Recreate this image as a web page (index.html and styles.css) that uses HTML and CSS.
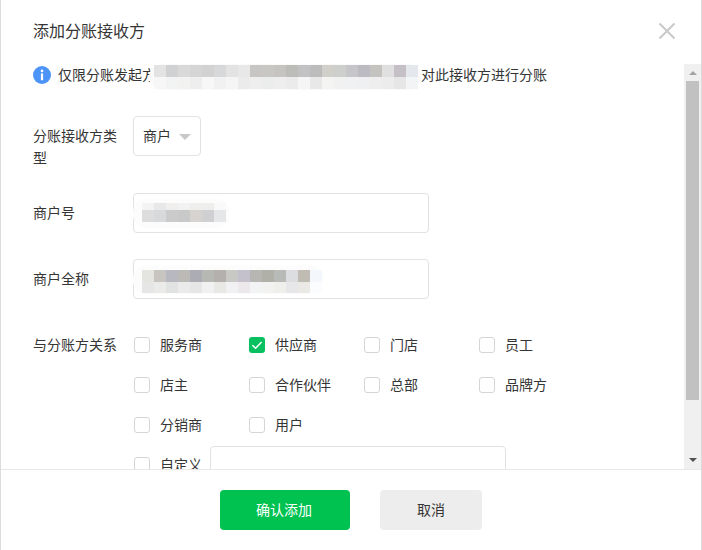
FILE: index.html
```html
<!DOCTYPE html>
<html lang="zh-CN">
<head>
    <meta charset="UTF-8">
    <meta name="viewport" content="width=device-width, initial-scale=1.0">
    <title>添加分账接收方</title>
    <link rel="stylesheet" href="styles.css">
</head>
<body>
    <div class="dialog">
        <div class="dialog-header">
            <h1>添加分账接收方</h1>
            <svg class="close-icon" width="18" height="18" viewBox="0 0 18 18">
                <path d="M1.5 1.5 L16.5 16.5 M16.5 1.5 L1.5 16.5" stroke="#c9c9c9" stroke-width="2" fill="none"/>
            </svg>
        </div>

        <div class="dialog-main">
            <div class="dialog-body">
                <div class="notice">
                    <svg class="info-icon" width="18" height="18" viewBox="0 0 18 18">
                        <circle cx="9" cy="9" r="9" fill="#4c94f8"/>
                        <circle cx="9" cy="4.9" r="1.3" fill="#fff"/>
                        <rect x="7.9" y="7.4" width="2.2" height="6.8" fill="#fff"/>
                    </svg>
                    <span class="notice-text">仅限分账发起方</span>
                    <span class="haze haze-notice"><span class="cells cells-notice"></span></span>
                    <span class="notice-text">对此接收方进行分账</span>
                </div>

                <div class="form-row form-row-type">
                    <label class="form-label">分账接收方类型</label>
                    <div class="select">
                        <span class="select-value">商户</span>
                        <span class="select-arrow"></span>
                    </div>
                </div>

                <div class="form-row">
                    <label class="form-label">商户号</label>
                    <div class="input-wrap">
                        <input type="text" class="text-input">
                        <span class="haze haze-no"><span class="cells cells-no"></span></span>
                    </div>
                </div>

                <div class="form-row">
                    <label class="form-label">商户全称</label>
                    <div class="input-wrap">
                        <input type="text" class="text-input">
                        <span class="haze haze-name"><span class="cells cells-name"></span></span>
                    </div>
                </div>

                <div class="form-row">
                    <label class="form-label">与分账方关系</label>
                    <div class="check-grid">
                        <label class="check-item"><span class="check-box"></span>服务商</label>
                        <label class="check-item"><span class="check-box checked">
                            <svg width="16" height="16" viewBox="0 0 16 16"><path d="M3.4 8.2 L6.6 11.2 L12.6 5" stroke="#fff" stroke-width="1.5" fill="none"/></svg>
                        </span>供应商</label>
                        <label class="check-item"><span class="check-box"></span>门店</label>
                        <label class="check-item"><span class="check-box"></span>员工</label>
                        <label class="check-item"><span class="check-box"></span>店主</label>
                        <label class="check-item"><span class="check-box"></span>合作伙伴</label>
                        <label class="check-item"><span class="check-box"></span>总部</label>
                        <label class="check-item"><span class="check-box"></span>品牌方</label>
                        <label class="check-item"><span class="check-box"></span>分销商</label>
                        <label class="check-item"><span class="check-box"></span>用户</label>
                        <div class="check-item check-custom">
                            <span class="check-box"></span>自定义
                            <input type="text" class="text-input custom-input">
                        </div>
                    </div>
                </div>
            </div>

            <div class="scrollbar">
                <span class="arrow-up"></span>
                <span class="thumb"></span>
                <span class="arrow-down"></span>
            </div>
        </div>

        <div class="dialog-footer">
            <button type="button" class="btn btn-primary">确认添加</button>
            <button type="button" class="btn btn-default">取消</button>
        </div>
    </div>
</body>
</html>
```

FILE: styles.css
```css
body {
    margin: 0;
    font-family: "Noto Sans CJK SC", "Liberation Sans", sans-serif;
    font-size: 14px;
    color: #353535;
    background: #fff;
}
.dialog {
    width: 702px;
    height: 550px;
    box-sizing: border-box;
    border-left: 1px solid #dcdcdc;
    border-right: 1px solid #dcdcdc;
    display: flex;
    flex-direction: column;
    overflow: hidden;
}
.dialog-header {
    height: 64px;
    flex: none;
    display: flex;
    justify-content: space-between;
    align-items: flex-start;
    padding: 0 25px 0 32px;
}
.dialog-header h1 {
    margin: 18px 0 0;
    font-size: 16px;
    font-weight: normal;
    line-height: 24px;
}
.close-icon {
    margin-top: 22px;
}
.dialog-main {
    flex: 1;
    min-height: 0;
    display: flex;
}
.dialog-body {
    flex: 1;
    min-width: 0;
    padding-left: 32px;
    overflow: hidden;
}
.notice {
    display: flex;
    align-items: center;
    height: 22px;
    line-height: 22px;
    margin-bottom: 30px;
}
.notice-text {
    margin-bottom: 2px;
}
.info-icon {
    margin-right: 7px;
}

/* mosaic patches that hide the merchant data */
.haze {
    display: block;
    background: #fafafa;
    border-radius: 13px;
}
.cells {
    display: block;
}
.haze-notice {
    width: 272px;
    height: 26px;
    margin: 3px 0 0 -7px;
    padding: 1px 0 0 5px;
    box-sizing: border-box;
    flex: none;
}
.cells-notice {
    width: 264px;
    height: 24px;
    background:
        linear-gradient(90deg, #e3e3e3 0 12px, #d0d1d2 0 24px, #d8d9d8 0 36px, #d5d5d5 0 48px, #d2d2d2 0 60px, #d7d8d9 0 72px, #e2e3e2 0 84px, #e8e8e8 0 96px, #c8c6c4 0 108px, #c8c7c4 0 120px, #c5c4c1 0 132px, #bcbdb9 0 144px, #c2c2c4 0 156px, #bdbcbc 0 168px, #d0cfca 0 180px, #cdcfcd 0 192px, #c6c6ca 0 204px, #bcbbc2 0 216px, #c4c3c0 0 228px, #e0e0e0 0 240px, #c4c0c5 0 252px, #e4e8ec 0) top / 100% 12px no-repeat,
        linear-gradient(90deg, #f7f7f7 0 12px, #f2f3f3 0 24px, #f2f2f1 0 36px, #eeeeee 0 48px, #f7f7f7 0 60px, #f1f1f1 0 72px, #f5f5f5 0 84px, #ebebeb 0 96px, #eeeeee 0 108px, #ebecec 0 120px, #eeeeee 0 132px, #ebebeb 0 144px, #f5f5f5 0 156px, #e8e8e8 0 168px, #f4f4f3 0 180px, #f0f1f0 0 192px, #f0f1f3 0 204px, #eff0f2 0 216px, #edeeed 0 228px, #ececec 0 240px, #e6e6e6 0 252px, #f2f4f5 0) bottom / 100% 12px no-repeat;
}
.input-wrap {
    position: relative;
    width: 296px;
    height: 40px;
}
.haze-no,
.haze-name {
    position: absolute;
    left: 0;
    box-sizing: border-box;
    background: #fcfcfc;
}
.haze-no {
    top: 6px;
    width: 96px;
    height: 29px;
    padding: 4px 0 0 9px;
}
.cells-no {
    width: 84px;
    height: 19px;
    background:
        linear-gradient(90deg, #f3f3f3 0 12px, #e8e8e8 0 24px, #f0efee 0 36px, #f2f2f2 0 48px, #eeeeec 0 60px, #eeeeed 0 72px, #f8f9f8 0) top / 100% 7px no-repeat,
        linear-gradient(90deg, #dddddd 0 12px, #d8d9da 0 24px, #cbcbcb 0 36px, #c9c9c9 0 48px, #d6d3d0 0 60px, #d0d0d2 0 72px, #e6e7e8 0) bottom / 100% 12px no-repeat;
}
.haze-name {
    top: 6px;
    width: 190px;
    height: 29px;
    padding: 5px 0 0 9px;
}
.cells-name {
    width: 180px;
    height: 23px;
    background:
        linear-gradient(90deg, #e4e4e0 0 12px, #c8c4c0 0 24px, #b8b9c0 0 36px, #bcbab6 0 48px, #acacb4 0 60px, #b6b8b4 0 72px, #b4b0ae 0 84px, #c8c8c4 0 96px, #c4c0cc 0 108px, #b8b6b2 0 120px, #b0b0a8 0 132px, #b8bab8 0 144px, #dcdde0 0 156px, #c0bcb4 0 168px, #f4f8fc 0) top / 100% 12px no-repeat,
        linear-gradient(90deg, #e6e6e6 0 12px, #ebebe9 0 24px, #e1e3e3 0 36px, #ebebeb 0 48px, #e6e6e6 0 60px, #f1f1f1 0 72px, #e8e8e4 0 84px, #f1f1f4 0 96px, #ede8ec 0 108px, #f2f3f5 0 120px, #f2f3f1 0 132px, #efefec 0 144px, #e7e7ea 0 156px, #ebe9e6 0 168px, #fbfcfe 0) bottom / 100% 11px no-repeat;
}

.form-row {
    display: flex;
    align-items: flex-start;
    margin-bottom: 26px;
}
.form-row-type {
    margin-bottom: 25px;
}
.form-label {
    width: 100px;
    flex: none;
    box-sizing: border-box;
    padding: 8px 14px 0 0;
    line-height: 22px;
}
.select {
    width: 68px;
    height: 40px;
    box-sizing: border-box;
    border: 1px solid #e2e2e2;
    border-radius: 4px;
    padding-left: 9px;
    display: flex;
    align-items: center;
    line-height: 36px;
}
.select-value {
    margin-bottom: 2px;
}
.select-arrow {
    width: 0;
    height: 0;
    margin: 2px 0 0 8px;
    border-left: 6px solid transparent;
    border-right: 6px solid transparent;
    border-top: 6px solid #c8c8c8;
}
.text-input {
    display: block;
    width: 296px;
    height: 40px;
    box-sizing: border-box;
    border: 1px solid #e2e2e2;
    border-radius: 4px;
    padding: 0 10px;
    background: #fff;
    outline: none;
}
.check-grid {
    display: grid;
    grid-template-columns: repeat(4, 115px);
    grid-auto-rows: 40px;
    padding-left: 1px;
}
.check-item {
    display: flex;
    align-items: center;
    box-sizing: border-box;
    padding-bottom: 2px;
    line-height: 22px;
}
.check-box {
    width: 16px;
    height: 16px;
    flex: none;
    box-sizing: border-box;
    margin: 2px 10px 0 0;
    border: 1px solid #d5d5d5;
    border-radius: 3px;
}
.check-box.checked {
    border: none;
    background: #07c160;
}
.check-box svg {
    display: block;
}
.check-custom {
    grid-column: 1 / -1;
}
.custom-input {
    margin: 4px 0 0 8px;
}

.scrollbar {
    width: 17px;
    flex: none;
    background: #f0f0f0;
    display: flex;
    flex-direction: column;
    align-items: center;
}
.arrow-up,
.arrow-down {
    width: 0;
    height: 0;
    border-left: 4px solid transparent;
    border-right: 4px solid transparent;
}
.arrow-up {
    margin: 7px 0 6px;
    border-bottom: 4px solid #a3a3a3;
}
.thumb {
    width: 13px;
    height: 319px;
    background: #c1c1c1;
}
.arrow-down {
    margin-top: auto;
    margin-bottom: 7px;
    border-top: 4px solid #505050;
}

.dialog-footer {
    height: 81px;
    flex: none;
    box-sizing: border-box;
    border-top: 1px solid #e8e8e8;
    display: flex;
    justify-content: center;
    gap: 30px;
    padding-top: 20px;
}
.btn {
    height: 40px;
    border: none;
    border-radius: 4px;
    padding: 0 6px 2px;
    font-family: inherit;
    font-size: 14px;
    cursor: pointer;
}
.btn-primary {
    width: 130px;
    padding-right: 8px;
    background: #00c250;
    color: #fff;
}
.btn-default {
    width: 102px;
    background: #ededed;
    color: #353535;
}
```
